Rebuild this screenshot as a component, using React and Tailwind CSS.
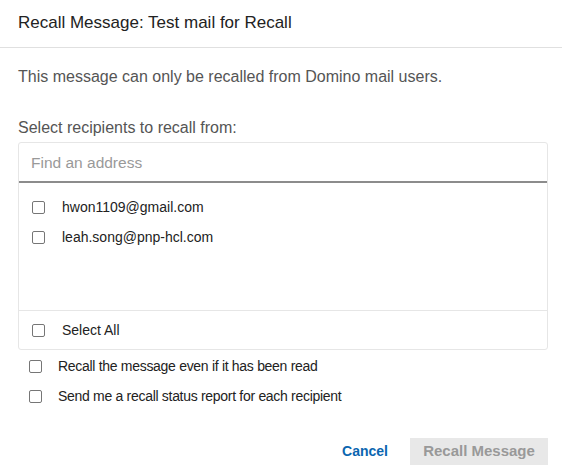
export default function App() {
  const Box = () => (
    <span className="inline-block w-[13px] h-[13px] border border-[#767676] rounded-[2px] bg-white shrink-0" />
  );
  return (
    <div className="w-[562px] h-[474px] bg-white text-[#222] overflow-hidden" style={{ fontFamily: '"Liberation Sans", Arial, sans-serif' }}>
      <div className="h-[48px] px-[18px] flex items-center border-b border-[#e0e0e0]">
        <h1 className="text-[17px] leading-none text-[#222] -mt-[3px]">Recall Message: Test mail for Recall</h1>
      </div>
      <div className="px-[18px]">
        <p className="mt-[20px] h-[18px] leading-[18px] text-[16px] text-[#555]">This message can only be recalled from Domino mail users.</p>
        <p className="mt-[33px] h-[18px] leading-[18px] text-[16px] text-[#555]">Select recipients to recall from:</p>
        <div className="mt-[5px] w-[530px] border border-[#e6e6e6] rounded-[3px]">
          <div className="h-[40px] flex items-center px-[12px] border-b-2 border-[#8c8c8c]">
            <span className="text-[15.5px] text-[#999] mt-[1px]">Find an address</span>
          </div>
          <div className="h-[127px] pt-[9px]">
            {["hwon1109@gmail.com", "leah.song@pnp-hcl.com"].map((e) => (
              <div key={e} className="h-[30px] flex items-center pl-[13px]">
                <Box />
                <span className="ml-[17px] text-[14px]">{e}</span>
              </div>
            ))}
          </div>
          <div className="h-[39px] flex items-center pl-[13px] border-t border-[#e6e6e6]">
            <Box />
            <span className="ml-[17px] text-[14px]">Select All</span>
          </div>
        </div>
        <div className="mt-[1px]">
          {["Recall the message even if it has been read", "Send me a recall status report for each recipient"].map((t) => (
            <div key={t} className="h-[30px] flex items-center pl-[11px]">
              <Box />
              <span className="ml-[16px] text-[14px] tracking-[-0.3px]">{t}</span>
            </div>
          ))}
        </div>
        <div className="mt-[27px] flex justify-end items-center w-[530px]">
          <button className="text-[14px] font-bold text-[#0b66b0] mr-[22px]">Cancel</button>
          <button className="w-[138px] h-[27px] bg-[#e8e8e8] text-[15px] font-bold text-[#999]">Recall Message</button>
        </div>
      </div>
    </div>
  );
}
